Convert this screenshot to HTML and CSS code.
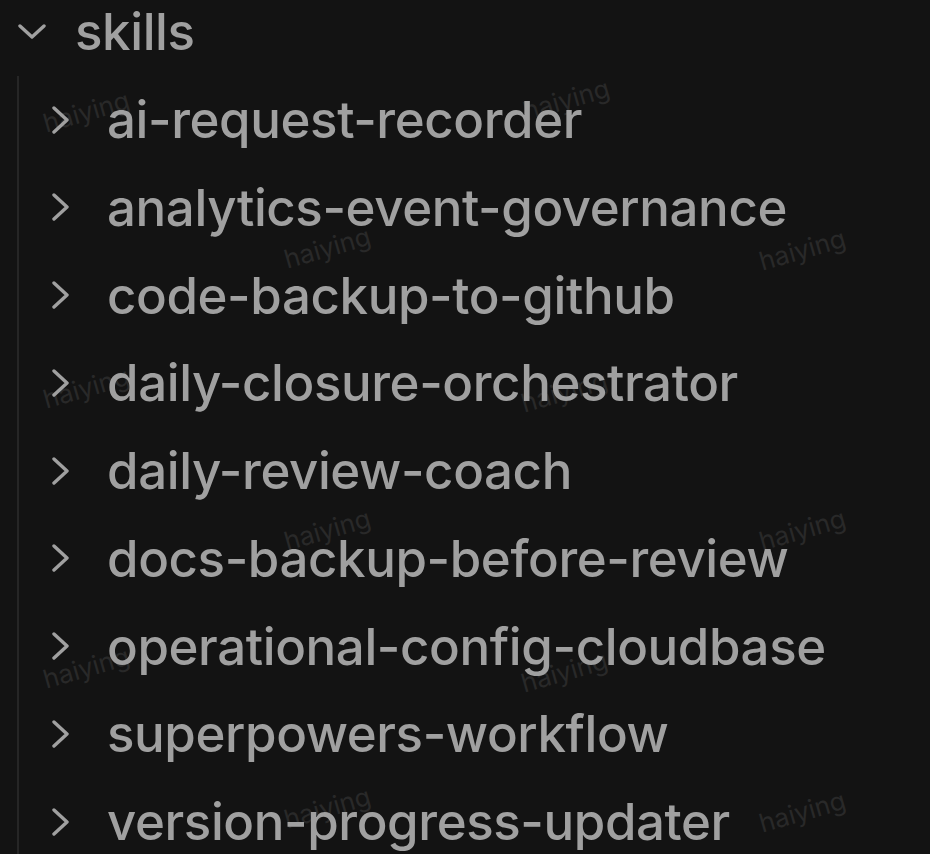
FILE: index.html
```html
<!DOCTYPE html>
<html>
<head>
<meta charset="utf-8">
<link rel="stylesheet" href="styles.css">
</head>
<body>
<div class="explorer">
  <div class="tree">
    <div class="row root">
      <svg class="chev down" viewBox="0 0 28 16"><path d="M2 2 L14 13 L26 2"/></svg>
      <span class="label">skills</span>
    </div>
    <div class="children">
      <div class="row"><svg class="chev" viewBox="0 0 18 28"><path d="M2 2 L15 14 L2 26"/></svg><span class="label">ai-request-recorder</span></div>
      <div class="row"><svg class="chev" viewBox="0 0 18 28"><path d="M2 2 L15 14 L2 26"/></svg><span class="label">analytics-event-governance</span></div>
      <div class="row"><svg class="chev" viewBox="0 0 18 28"><path d="M2 2 L15 14 L2 26"/></svg><span class="label">code-backup-to-github</span></div>
      <div class="row"><svg class="chev" viewBox="0 0 18 28"><path d="M2 2 L15 14 L2 26"/></svg><span class="label">daily-closure-orchestrator</span></div>
      <div class="row"><svg class="chev" viewBox="0 0 18 28"><path d="M2 2 L15 14 L2 26"/></svg><span class="label">daily-review-coach</span></div>
      <div class="row"><svg class="chev" viewBox="0 0 18 28"><path d="M2 2 L15 14 L2 26"/></svg><span class="label">docs-backup-before-review</span></div>
      <div class="row"><svg class="chev" viewBox="0 0 18 28"><path d="M2 2 L15 14 L2 26"/></svg><span class="label">operational-config-cloudbase</span></div>
      <div class="row"><svg class="chev" viewBox="0 0 18 28"><path d="M2 2 L15 14 L2 26"/></svg><span class="label">superpowers-workflow</span></div>
      <div class="row"><svg class="chev" viewBox="0 0 18 28"><path d="M2 2 L15 14 L2 26"/></svg><span class="label">version-progress-updater</span></div>
    </div>
  </div>
  <div class="wm" style="left:42px;top:96px">haiying</div>
  <div class="wm" style="left:522px;top:84px">haiying</div>
  <div class="wm" style="left:283px;top:232px">haiying</div>
  <div class="wm" style="left:758px;top:234px">haiying</div>
  <div class="wm" style="left:42px;top:372px">haiying</div>
  <div class="wm" style="left:520px;top:376px">haiying</div>
  <div class="wm" style="left:283px;top:514px">haiying</div>
  <div class="wm" style="left:758px;top:514px">haiying</div>
  <div class="wm" style="left:42px;top:652px">haiying</div>
  <div class="wm" style="left:520px;top:656px">haiying</div>
  <div class="wm" style="left:283px;top:792px">haiying</div>
  <div class="wm" style="left:758px;top:796px">haiying</div>
</div>
</body>
</html>
```
FILE: styles.css
```css
html, body {
  margin: 0;
  padding: 0;
  background: #131313;
  overflow: hidden;
}
.explorer {
  position: relative;
  width: 930px;
  height: 854px;
  overflow: hidden;
  background: #131313;
  font-family: Inter, "Noto Sans", sans-serif;
  color: #a0a0a0;
}
.tree {
  position: relative;
  z-index: 2;
  margin-top: -12px;
}
.row {
  display: flex;
  align-items: center;
  height: 87.75px;
}
.root {
  padding-left: 18px;
}
.label {
  font-size: 51px;
  font-weight: 500;
  letter-spacing: -0.4px;
  white-space: nowrap;
}
.root .label {
  margin-left: 29px;
}
.children {
  margin-left: 17px;
  border-left: 2px solid #262626;
  padding-left: 33px;
}
.children .row .label {
  margin-left: 37px;
}
.chev {
  flex: none;
  fill: none;
  stroke: #a0a0a0;
  stroke-width: 3.4;
  stroke-linecap: round;
  stroke-linejoin: round;
}
.chev.down {
  width: 28px;
  height: 16px;
}
.children .chev {
  width: 18px;
  height: 28px;
}
.wm {
  position: absolute;
  z-index: 1;
  font-size: 26px;
  color: #292929;
  transform: rotate(-16deg);
  transform-origin: center;
  white-space: nowrap;
}
```
